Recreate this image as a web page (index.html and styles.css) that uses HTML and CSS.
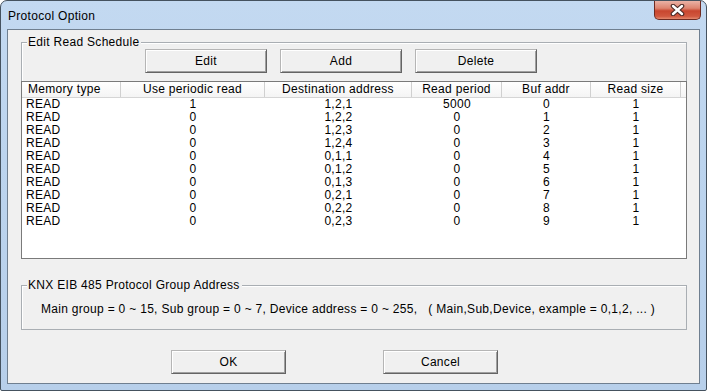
FILE: index.html
```html
<!DOCTYPE html>
<html lang="en">
<head>
  <meta charset="UTF-8">
  <title>Protocol Option</title>
  <link rel="stylesheet" href="styles.css">
</head>
<body>
  <div class="window">
    <!-- Title bar -->
    <div class="titlebar">
      <span class="title">Protocol Option</span>
      <div class="close">
        <svg width="15" height="12" viewBox="0 0 15 12">
          <path d="M3 2 L12 10 M12 2 L3 10" stroke="#4a2a26" stroke-width="4.6" stroke-linecap="round"/>
          <path d="M3 2 L12 10 M12 2 L3 10" stroke="#ffffff" stroke-width="2.4" stroke-linecap="round"/>
        </svg>
      </div>
    </div>

    <div class="client">
      <!-- Edit Read Schedule -->
      <div class="group group-schedule">
        <span class="group-label">Edit Read Schedule</span>
        <div class="toolbar">
          <button class="btn btn-tool">Edit</button>
          <button class="btn btn-tool">Add</button>
          <button class="btn btn-tool">Delete</button>
        </div>

        <div class="list">
          <div class="row head">
            <div class="cell left">Memory type</div>
            <div class="cell">Use periodic read</div>
            <div class="cell">Destination address</div>
            <div class="cell">Read period</div>
            <div class="cell">Buf addr</div>
            <div class="cell">Read size</div>
            <div class="cell filler"></div>
          </div>
          <div id="rows"></div>
        </div>
      </div>

      <!-- Group address help -->
      <div class="group group-address">
        <span class="group-label">KNX EIB 485 Protocol Group Address</span>
        <p class="hint">Main group = 0 ~ 15, Sub group = 0 ~ 7, Device address = 0 ~ 255, &nbsp;&nbsp;( Main,Sub,Device, example = 0,1,2, ... )</p>
      </div>

      <div class="actions">
        <button class="btn btn-dialog">OK</button>
        <button class="btn btn-dialog">Cancel</button>
      </div>
    </div>
  </div>

  <script>
    const schedule = [
      ["READ", 1, "1,2,1", 5000, 0, 1],
      ["READ", 0, "1,2,2", 0, 1, 1],
      ["READ", 0, "1,2,3", 0, 2, 1],
      ["READ", 0, "1,2,4", 0, 3, 1],
      ["READ", 0, "0,1,1", 0, 4, 1],
      ["READ", 0, "0,1,2", 0, 5, 1],
      ["READ", 0, "0,1,3", 0, 6, 1],
      ["READ", 0, "0,2,1", 0, 7, 1],
      ["READ", 0, "0,2,2", 0, 8, 1],
      ["READ", 0, "0,2,3", 0, 9, 1]
    ];

    const rows = document.getElementById("rows");
    schedule.forEach(item => {
      const row = document.createElement("div");
      row.className = "row";
      item.forEach((value, i) => {
        const cell = document.createElement("div");
        cell.className = i === 0 ? "cell left" : "cell";
        cell.textContent = value;
        row.appendChild(cell);
      });
      rows.appendChild(row);
    });
  </script>
</body>
</html>
```

FILE: styles.css
```css
/* General */
body {
  margin: 0;
  font-family: "Liberation Sans", Arial, sans-serif;
  font-size: 12px;
  letter-spacing: 0.3px;
  color: #000;
  background: #fff;
}

/* Window frame */
.window {
  width: 707px;
  height: 391px;
  box-sizing: border-box;
  border: 1px solid #45525f;
  border-radius: 7px 7px 2px 2px;
  background: linear-gradient(180deg, #c3d9f1 0%, #bcd4ee 40%, #b7cfea 100%);
  display: flex;
  flex-direction: column;
}

.titlebar {
  height: 28px;
  display: flex;
  align-items: flex-start;
}

.title {
  margin: 8px 0 0 7px;
  line-height: 14px;
  color: #000;
}

.close {
  margin-left: auto;
  margin-right: 5px;
  width: 47px;
  height: 19px;
  box-sizing: border-box;
  border: 1px solid #6e2b22;
  border-top: none;
  border-radius: 0 0 5px 5px;
  background: linear-gradient(180deg, #eab2a6 0%, #dd8470 40%, #c8462f 55%, #d0583f 85%, #e48a6f 100%);
  display: flex;
  justify-content: center;
  align-items: center;
}

/* Client area */
.client {
  flex: 1;
  margin: 0 6px 6px;
  border: 1px solid #6f7f90;
  background: #f0f0f0;
  display: flex;
  flex-direction: column;
}

/* Group boxes */
.group {
  position: relative;
  margin: 0 12px 0 13px;
  border: 1px solid #a9aeb3;
  box-shadow: inset 1px 1px #fff;
}

.group-label {
  position: absolute;
  top: -8px;
  left: 5px;
  padding: 0 2px 0 1px;
  line-height: 14px;
  background: #f0f0f0;
}

.group-schedule {
  margin-top: 12px;
  height: 217px;
  box-sizing: border-box;
  display: flex;
  flex-direction: column;
}

.group-address {
  margin-top: 26px;
  height: 45px;
  box-sizing: border-box;
}

.hint {
  margin: 0;
  padding: 16px 0 0 19px;
  line-height: 14px;
  white-space: nowrap;
}

/* Buttons */
.btn {
  font-family: inherit;
  font-size: 12px;
  letter-spacing: 0.3px;
  color: #000;
  height: 24px;
  padding: 0;
  box-sizing: border-box;
  background: #f0f0f0;
  border: 1px solid;
  border-color: #b5b5b5 #646464 #646464 #b5b5b5;
  box-shadow: inset 1px 1px #fff, inset -1px -1px #a0a0a0;
}

.toolbar {
  display: flex;
  gap: 13px;
  padding: 6px 0 0 123px;
}

.btn-tool {
  width: 122px;
}

.actions {
  display: flex;
  gap: 97px;
  padding: 20px 0 0 163px;
}

.btn-dialog {
  width: 115px;
}

/* List view */
.list {
  margin: 8px -1px -1px -1px;
  flex: 1;
  border: 1px solid #7a7a7a;
  background: #fff;
}

.row {
  display: grid;
  grid-template-columns: 99px 144px 147px 90px 89px 90px 1fr;
  height: 13px;
  line-height: 13px;
}

.cell {
  text-align: center;
  white-space: nowrap;
  overflow: hidden;
}

.cell.left {
  text-align: left;
  padding-left: 4px;
}

.row.head {
  height: 16px;
  line-height: 15px;
  background: linear-gradient(180deg, #ffffff 0%, #f4f4f4 100%);
  border-bottom: 1px solid #d5d5d5;
  box-sizing: border-box;
}

.row.head .cell {
  border-right: 1px solid #d0d0d0;
}

.row.head .cell.left {
  padding-left: 6px;
}

.row.head .filler {
  border-right: none;
}
```
